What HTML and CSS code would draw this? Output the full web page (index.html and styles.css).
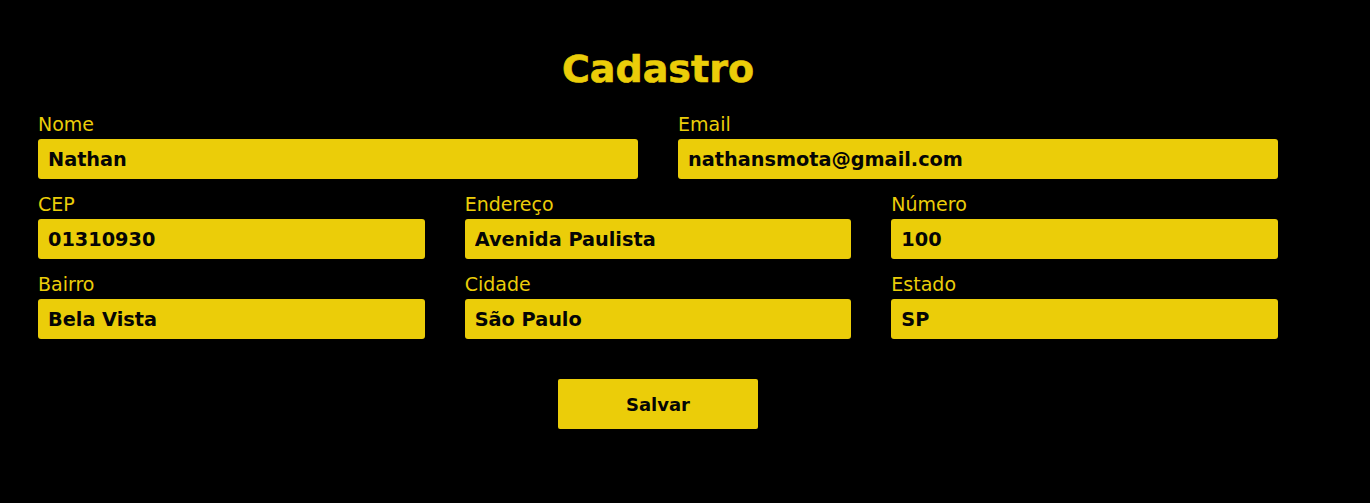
FILE: index.html
```html
<!DOCTYPE html>
<html lang="pt-BR">
<head>
<meta charset="utf-8">
<title>Cadastro</title>
<link rel="stylesheet" href="styles.css">
</head>
<body>
<main class="page">
  <h1 class="title">Cadastro</h1>
  <form class="form">
    <div class="field wide">
      <label class="label" for="nome">Nome</label>
      <input class="input" id="nome" type="text" value="Nathan">
    </div>
    <div class="field wide">
      <label class="label" for="email">Email</label>
      <input class="input" id="email" type="text" value="nathansmota@gmail.com">
    </div>
    <div class="field">
      <label class="label" for="cep">CEP</label>
      <input class="input" id="cep" type="text" value="01310930">
    </div>
    <div class="field">
      <label class="label" for="endereco">Endereço</label>
      <input class="input" id="endereco" type="text" value="Avenida Paulista">
    </div>
    <div class="field">
      <label class="label" for="numero">Número</label>
      <input class="input" id="numero" type="text" value="100">
    </div>
    <div class="field">
      <label class="label" for="bairro">Bairro</label>
      <input class="input" id="bairro" type="text" value="Bela Vista">
    </div>
    <div class="field">
      <label class="label" for="cidade">Cidade</label>
      <input class="input" id="cidade" type="text" value="São Paulo">
    </div>
    <div class="field">
      <label class="label" for="estado">Estado</label>
      <input class="input" id="estado" type="text" value="SP">
    </div>
    <div class="actions">
      <button class="button" type="button">Salvar</button>
    </div>
  </form>
</main>
</body>
</html>
```
FILE: styles.css
```css
html, body {
  margin: 0;
  padding: 0;
  background: #000;
}

body {
  font-family: "DejaVu Sans", "Liberation Sans", sans-serif;
  color: #ebcd09;
}

.page {
  width: 1240px;
  margin-left: 38px;
  padding-top: 46px;
}

.title {
  margin: 0;
  font-size: 38px;
  line-height: 46px;
  font-weight: 700;
  text-align: center;
  color: #ebcd09;
  -webkit-text-stroke: 0.6px #ebcd09;
}

.form {
  margin-top: 20px;
  display: grid;
  grid-template-columns: repeat(6, 1fr);
  column-gap: 40px;
  row-gap: 13px;
}

.field {
  grid-column: span 2;
  display: flex;
  flex-direction: column;
}

.field.wide {
  grid-column: span 3;
}

.label {
  font-size: 19px;
  line-height: 24px;
  margin-bottom: 3px;
  color: #ebcd09;
}

.input {
  box-sizing: border-box;
  height: 40px;
  width: 100%;
  border: none;
  border-radius: 3px;
  background: #ebcd09;
  padding: 0 10px;
  font-family: "DejaVu Sans", "Liberation Sans", sans-serif;
  font-size: 19.3px;
  font-weight: 700;
  color: #050505;
  outline: none;
}

.actions {
  grid-column: 1 / -1;
  display: flex;
  justify-content: center;
  margin-top: 27px;
}

.button {
  width: 200px;
  height: 50px;
  border: none;
  border-radius: 2px;
  background: #ebcd09;
  font-family: "DejaVu Sans", "Liberation Sans", sans-serif;
  font-size: 18px;
  font-weight: 700;
  color: #050505;
  cursor: pointer;
}
```
